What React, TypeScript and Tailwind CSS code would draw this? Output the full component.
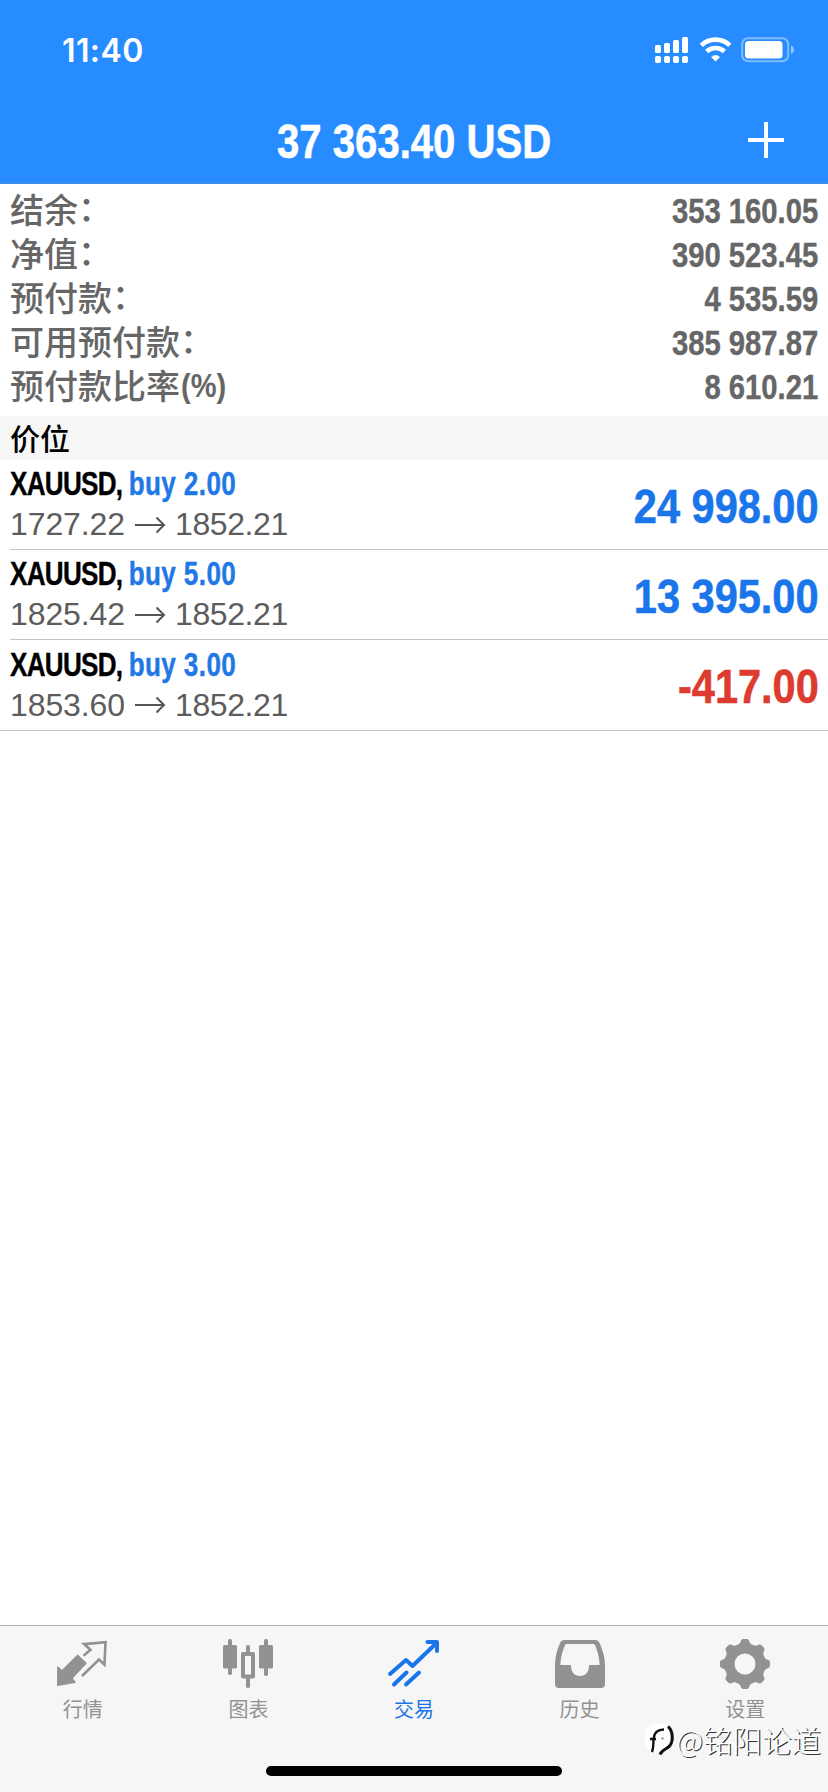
import React from "react";

const latin = "font-['Liberation_Sans','Noto_Sans_CJK_SC',sans-serif]";
const cjk = "font-['Noto_Sans_CJK_SC',sans-serif]";

const stats = [
  { label: "结余", suffix: "：", value: "353 160.05" },
  { label: "净值", suffix: "：", value: "390 523.45" },
  { label: "预付款", suffix: "：", value: "4 535.59" },
  { label: "可用预付款", suffix: "：", value: "385 987.87" },
  { label: "预付款比率", suffix: "(%)", value: "8 610.21" },
];

const positions = [
  { symbol: "XAUUSD,", side: "buy 2.00", open: "1727.22", now: "1852.21", profit: "24 998.00", up: true },
  { symbol: "XAUUSD,", side: "buy 5.00", open: "1825.42", now: "1852.21", profit: "13 395.00", up: true },
  { symbol: "XAUUSD,", side: "buy 3.00", open: "1853.60", now: "1852.21", profit: "-417.00", up: false },
];

function StatusIcons() {
  return (
    <svg width="142" height="30" viewBox="0 0 142 30" fill="none">
      <g fill="#fff">
        <rect x="1" y="9" width="6" height="8" rx="1.5" />
        <rect x="10" y="7" width="6" height="10" rx="1.5" />
        <rect x="19" y="4" width="6" height="13" rx="1.5" />
        <rect x="28" y="1" width="6" height="16" rx="1.5" />
        <rect x="1" y="20" width="6" height="7" rx="1.8" />
        <rect x="10" y="20" width="6" height="7" rx="1.8" />
        <rect x="19" y="20" width="6" height="7" rx="1.8" />
        <rect x="28" y="20" width="6" height="7" rx="1.8" />
        <path d="M61.5 25.2l-4-4.2c2.4-2.1 5.8-2.1 8.200 0z" stroke="#fff" strokeWidth="0.6" strokeLinejoin="round" />
      </g>
      <path d="M47.300 9.300c8-7.600 20.500-7.600 28.500 0" stroke="#fff" strokeWidth="4.600" />
      <path d="M52.700 15.500c5-4.700 12.700-4.700 17.700 0" stroke="#fff" strokeWidth="4.600" />
      <rect x="88.200" y="2.200" width="46" height="23" rx="6" stroke="#fff" strokeOpacity=".42" strokeWidth="2" />
      <rect x="91" y="5" width="37.500" height="17.500" rx="3.500" fill="#fff" />
      <path d="M137 9.500c4 1.800 4 6.700 0 8.500z" fill="#fff" fillOpacity=".5" />
    </svg>
  );
}

function QuotesIcon() {
  return (
    <svg width="56" height="52" viewBox="0 0 56 52">
      <path d="M2.700 28v18.300l17.500-3-3.200-4L31 24.300 22.700 16.300 7 31.700z" fill="#929292" stroke="#929292" strokeWidth="1.200" strokeLinejoin="round" />
      <path d="M28.500 16.700l7-5.900-6.500-5.700 21.500-2-1 22.500-5.500-5.100L27 37" fill="none" stroke="#929292" strokeWidth="2.600" />
    </svg>
  );
}

function ChartIcon() {
  return (
    <svg width="56" height="52" viewBox="0 0 56 52" fill="#929292">
      <rect x="8" y="0" width="4" height="36" rx="1.800" />
      <rect x="3" y="6" width="14" height="23.500" rx="1.500" />
      <rect x="44" y="0" width="4" height="37" rx="1.800" />
      <rect x="39" y="6" width="14" height="23.500" rx="1.500" />
      <rect x="26" y="6" width="4" height="9" rx="1.800" />
      <rect x="26" y="38" width="4" height="11" rx="1.800" />
      <rect x="23" y="15" width="10" height="22.500" fill="none" stroke="#929292" strokeWidth="4" strokeLinejoin="round" />
    </svg>
  );
}

function TradeIcon() {
  return (
    <svg width="56" height="52" viewBox="0 0 56 52" fill="none" stroke="#1a75ea" strokeWidth="4" strokeLinecap="round" strokeLinejoin="round">
      <path d="M4 35l16-14 6.500 6L50.500 4" />
      <path d="M41.500 3H51v9" />
      <path d="M8 45.500L20.500 33.500" />
      <path d="M20 45.500L33 33.500" />
    </svg>
  );
}

function HistoryIcon() {
  return (
    <svg width="56" height="52" viewBox="0 0 56 52">
      <path fillRule="evenodd" fill="#929292" d="M12.500 1h30.500c2.300 0 3.800 1 4.600 3C50.500 11 53 18 53 26V45c0 2.500-1.500 4-4 4H7c-2.500 0-4-1.500-4-4V26C3 18 5 11 8 4c.9-2 2.300-3 4.500-3zM14.700 5c-1 0-1.600.6-1.900 1.500C10.500 12 8.800 18 8.300 26H19c0 7.500 3.500 11 9 11s9-3.500 9-11h10.700c-.5-8-2.200-14-4.500-19.500C42.900 5.600 42.300 5 41.300 5z" />
    </svg>
  );
}

function SettingsIcon() {
  return (
    <svg width="56" height="52" viewBox="0 0 56 52">
      <g fill="#929292">
        <circle cx="28" cy="25" r="20.500" />
        {[0, 45, 90, 135, 180, 225, 270, 315].map((a) => (
          <path key={a} transform={`rotate(${a} 28 25)`} d="M19 6.500c3-.8 4-2 4.800-4.300C24.400.5 25.200 0 26.500 0h3c1.300 0 2.100.5 2.700 2.200C33 4.500 34 5.700 37 6.500z" />
        ))}
      </g>
      <circle cx="28" cy="25" r="10.500" fill="#f6f6f6" />
    </svg>
  );
}

const tabs = [
  { label: "行情", Icon: QuotesIcon, active: false },
  { label: "图表", Icon: ChartIcon, active: false },
  { label: "交易", Icon: TradeIcon, active: true },
  { label: "历史", Icon: HistoryIcon, active: false },
  { label: "设置", Icon: SettingsIcon, active: false },
];

export default function App() {
  return (
    <div className={`relative flex h-[1792px] w-[828px] flex-col overflow-hidden bg-white ${latin}`}>
      <header className="flex h-[184px] shrink-0 flex-col border-b-2 border-[#3d8fee] bg-[#268cff] text-white">
        <div className="flex h-[100px] items-center justify-between pt-px pr-[32px] pl-[62px]">
          <span className="font-['Inter',sans-serif] text-[32px] leading-[40px] font-semibold tracking-[0.4px]">11:40</span>
          <StatusIcons />
        </div>
        <div className="grid h-[79px] grid-cols-[1fr_auto_1fr] items-center">
          <span />
          <h1 className="scale-x-[0.835] pt-[5px] text-[48px] leading-[60px] font-bold whitespace-nowrap [-webkit-text-stroke:0.6px_currentColor]">37 363.40 USD</h1>
          <svg className="mr-[43px] justify-self-end" width="38" height="38" viewBox="0 0 38 38" stroke="#fff" strokeWidth="4">
            <path d="M19 1v36M1 19h36" />
          </svg>
        </div>
      </header>

      <section className="flex h-[232px] shrink-0 flex-col px-[10px] pt-[4px] text-[#666]">
        {stats.map((s) => (
          <div key={s.label} className="flex h-[44px] items-center justify-between">
            <span className={`flex h-[44px] items-center pb-[2px] text-[34px] leading-[42px] font-medium whitespace-nowrap ${cjk}`}>
              <span>{s.label}</span>
              {s.suffix === "：" ? (
                <span className="pb-[5px] leading-[37px]">{s.suffix}</span>
              ) : (
                <b className="ml-px origin-left scale-x-[0.88] pt-px font-['Liberation_Sans',sans-serif] text-[33px] leading-[36px]">{s.suffix}</b>
              )}
            </span>
            <span className="origin-right scale-x-[0.835] pt-px text-[35px] leading-[40px] font-bold [-webkit-text-stroke:0.4px_currentColor]">{s.value}</span>
          </div>
        ))}
      </section>

      <h2 className={`flex h-[44px] shrink-0 items-center bg-[#f6f6f6] px-[10px] pb-[3px] text-[30px] leading-[40px] font-medium text-black ${cjk}`}>价位</h2>

      <ul className="flex shrink-0 flex-col border-b border-[#c4c4c6]">
        {positions.map((p, i) => (
          <li key={p.side} className={`ml-[10px] flex h-[90px] items-center justify-between pr-[9px] ${i < 2 ? "border-b border-[#c4c4c6]" : ""}`}>
            <div className="flex flex-col">
              <div className="flex h-[41px] origin-left scale-x-[0.79] items-center gap-[8px] pb-[2px] text-[33px] leading-[39px] font-bold whitespace-nowrap [-webkit-text-stroke:0.4px_currentColor]">
                <span className="tracking-[-0.9px] text-black">{p.symbol}</span>
                <span className="tracking-[0.5px] text-[#1f78e6]">{p.side}</span>
              </div>
              <div className="flex h-[40px] items-center pb-px text-[32px] leading-[39px] tracking-[-0.1px] text-[#5c5c5c]">
                <span>{p.open}</span>
                <svg className="mr-[9px] ml-[9px]" width="32" height="20" viewBox="0 0 32 20" fill="none" stroke="#555" strokeWidth="2">
                  <path d="M1 10h29M22.500 2.500L30 10l-7.500 7.500" />
                </svg>
                <span className="tracking-[-0.4px]">{p.now}</span>
              </div>
            </div>
            <span className={`origin-right scale-x-[0.865] pt-[4px] text-[48px] leading-[60px] font-bold [-webkit-text-stroke:0.6px_currentColor] ${p.up ? "text-[#1a75ea]" : "text-[#dd3b2f]"}`}>{p.profit}</span>
          </li>
        ))}
      </ul>

      <nav className="mt-auto flex h-[167px] shrink-0 flex-col items-center border-t border-[#adadad] bg-[#f6f6f6]">
        <div className="grid w-full grid-cols-5 pt-[13px]">
          {tabs.map(({ label, Icon, active }) => (
            <div key={label} className={`flex flex-col items-center ${active ? "text-[#1a75ea]" : "text-[#929292]"}`}>
              <Icon />
              <span className={`mt-[4px] text-[20px] leading-[28px] ${cjk}`}>{label}</span>
            </div>
          ))}
        </div>
        <div className="mt-auto mb-[16px] h-[10px] w-[296px] rounded-full bg-black" />
      </nav>

      <div className={`absolute right-[7px] bottom-[33px] flex items-center text-[29.500px] leading-[40px] font-light text-white [text-shadow:1.2px_1.2px_0.5px_#333] ${cjk}`}>
        <svg className="mt-[5px] -mr-[2px]" width="34" height="36" viewBox="0 0 34 36" fill="none">
          <rect x="1" y="1" width="28" height="28" rx="10" fill="#fff" />
          <path d="M8 29c1.500-4 1.500-8 1.500-13M6 16h6M9.500 16C10 9 14 6.500 20 6.500" stroke="#111" strokeWidth="2.400" />
          <path d="M24 3.500c5 4 5.500 14 2 19-3 4-8 3.500-10 9" stroke="#111" strokeWidth="3" />
          <circle cx="18.500" cy="15.500" r="1" fill="#666" />
        </svg>
        <span>@铭阳论道</span>
      </div>
    </div>
  );
}
